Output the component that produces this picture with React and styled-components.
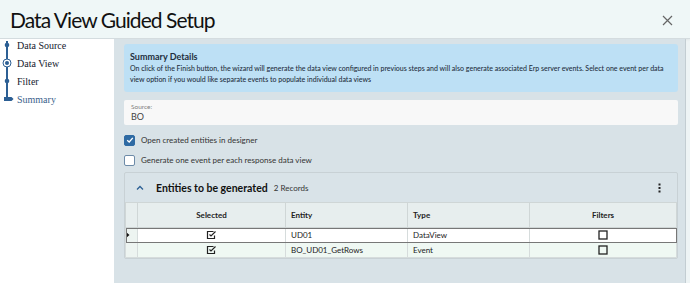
import React from 'react';
import styled, { createGlobalStyle } from 'styled-components';

const GlobalStyle = createGlobalStyle`
  body {
    margin: 0;
    font-family: Lato, "Open Sans", sans-serif;
    color: #222;
  }
`;

const Window = styled.div`
  width: 690px;
  height: 283px;
  display: grid;
  grid-template-rows: 39px 1fr;
  overflow: hidden;
  background: #eef4f5;
`;

const Header = styled.div`
  display: flex;
  justify-content: space-between;
  align-items: center;
  padding: 0 17px 0 10px;
  background-color: #eff7f7;
  border-bottom: 1px solid #d4dcdf;
  box-shadow: 0 1px 2px rgba(0, 0, 0, 0.06);
`;

const Title = styled.h1`
  margin: 0;
  font-size: 21px;
  font-weight: 400;
  color: #111;
  letter-spacing: -0.95px;
`;

const CloseButton = styled.button`
  display: flex;
  background: none;
  border: none;
  padding: 0;
  margin-top: 2px;
  cursor: pointer;
`;

const Body = styled.div`
  display: grid;
  grid-template-columns: 114px minmax(0, 1fr) 4px;
  min-height: 0;
`;

const Sidebar = styled.div`
  background: #fff;
`;

const Steps = styled.ul`
  list-style: none;
  margin: -3px 0 0;
  padding: 0;
  position: relative;

  &::before {
    content: '';
    position: absolute;
    left: 6px;
    top: 5px;
    height: 58px;
    width: 1.5px;
    background: #2c5f94;
  }
`;

const Step = styled.li`
  display: flex;
  align-items: center;
  height: 18px;
  font-family: "Liberation Serif", serif;
  font-size: 10px;
  color: ${p => (p.active ? '#3b5f8c' : '#14202e')};
`;

const Marker = styled.span`
  width: 17px;
  display: flex;
  justify-content: center;
  padding-right: 3px;
  box-sizing: border-box;
  position: relative;
  z-index: 1;
`;

const Main = styled.div`
  background: #d8e2e7;
  border-right: 1px solid #c3cdd2;
  padding: 5px 7px 0 10px;
  display: flex;
  flex-direction: column;
  min-height: 0;
  min-width: 0;
`;

const InfoBox = styled.div`
  background: #bde0f5;
  border-radius: 3px;
  padding: 7px 6px 6px;
  height: 48px;
  box-sizing: border-box;
`;

const InfoTitle = styled.div`
  font-size: 9px;
  font-weight: 700;
  color: #1f2f3d;
  line-height: 11px;
  margin-bottom: 1px;
`;

const InfoText = styled.div`
  font-size: 7px;
  line-height: 11px;
  color: #1f2f3d;
  font-weight: 500;
`;

const Field = styled.div`
  margin-top: 8px;
  height: 25px;
  box-sizing: border-box;
  background: #f8f8f8;
  border-radius: 2px;
  padding: 3px 7px;
  display: flex;
  flex-direction: column;
`;

const FieldLabel = styled.span`
  font-size: 6.5px;
  color: #808080;
  line-height: 8px;
`;

const FieldValue = styled.span`
  font-size: 9px;
  color: #444;
  line-height: 11px;
`;

const CheckRow = styled.label`
  display: flex;
  align-items: center;
  gap: 6px;
  height: 20px;
  font-size: 8px;
  color: #333;
  margin-top: ${p => p.first ? '5px' : '0'};
`;

const Box = styled.span`
  width: 11px;
  height: 11px;
  border-radius: 2px;
  box-sizing: border-box;
  display: flex;
  align-items: center;
  justify-content: center;
  background: ${p => (p.checked ? '#2e6aa3' : '#fff')};
  border: 1px solid ${p => (p.checked ? '#2e6aa3' : '#6d8ba8')};
`;

const GridPanel = styled.div`
  margin-top: 2px;
  border: 1px solid #c8d1d5;
  border-radius: 2px;
  background: #d9e3e8;
`;

const GridHeader = styled.div`
  display: flex;
  align-items: center;
  height: 29px;
  padding: 0 16px 0 11px;
`;

const GridTitle = styled.span`
  font-size: 10.5px;
  font-weight: 700;
  color: #111;
  margin-left: 12px;
`;

const GridCount = styled.span`
  font-size: 8px;
  color: #333;
  margin-left: 6px;
  flex: 1;
`;

const Table = styled.table`
  width: 100%;
  border-collapse: collapse;
  table-layout: fixed;
  font-size: 8px;
  color: #222;
`;

const Th = styled.th`
  height: 24px;
  background: #e7eeee;
  border: 1px solid #cfd6d6;
  font-weight: 700;
  text-align: ${p => (p.center ? 'center' : 'left')};
  padding: 0 5px;
`;

const Row = styled.tr`
  background: ${p => (p.alt ? '#eff8f3' : '#fff')};
  outline: ${p => (p.selected ? '1px solid #777' : 'none')};
  outline-offset: -1px;
`;

const Td = styled.td`
  height: 14px;
  border: 1px solid #d6dcdc;
  padding: 0 5px;
  text-align: ${p => (p.center ? 'center' : 'left')};
  background: ${p => (p.indicator ? '#edf4f1' : 'transparent')};
  line-height: 0;
`;

const CellText = styled.span`
  line-height: 13px;
  display: inline-block;
`;

const CloseIcon = () => (
  <svg width="11" height="11" viewBox="0 0 11 11">
    <path d="M1 1L10 10M10 1L1 10" stroke="#666" strokeWidth="1.2" />
  </svg>
);

const CheckedIcon = () => (
  <svg width="11" height="10" viewBox="0 0 11 10">
    <path d="M7.5 1.5H1.5V8.5H8.5V5.5" fill="none" stroke="#222" strokeWidth="1.2" />
    <path d="M3.5 4.5L5 6L9.5 1.5" fill="none" stroke="#222" strokeWidth="1.2" />
  </svg>
);

const EmptyIcon = () => (
  <svg width="10" height="10" viewBox="0 0 10 10">
    <rect x="1" y="1" width="8" height="8" fill="none" stroke="#222" strokeWidth="1.3" />
  </svg>
);

const TickIcon = () => (
  <svg width="8" height="8" viewBox="0 0 8 8">
    <path d="M1.2 4.2L3.2 6L6.8 1.8" fill="none" stroke="#fff" strokeWidth="1.3" />
  </svg>
);

const steps = [
  { label: 'Data Source', kind: 'dot' },
  { label: 'Data View', kind: 'ring' },
  { label: 'Filter', kind: 'dot' },
  { label: 'Summary', kind: 'flag', active: true },
];

const StepMarker = ({ kind }) => {
  if (kind === 'ring') {
    return (
      <svg width="10" height="10" viewBox="0 0 10 10">
        <circle cx="5" cy="5" r="4" fill="#fff" stroke="#2c5f94" strokeWidth="1" />
        <circle cx="5" cy="5" r="2" fill="#2c5f94" />
      </svg>
    );
  }
  if (kind === 'flag') {
    return (
      <svg width="12" height="6" viewBox="0 0 12 6" style={{ marginLeft: 4 }}>
        <path d="M0 0.5H9L11.5 3L9 5.5H0Z" fill="#2c5f94" />
      </svg>
    );
  }
  return (
    <svg width="6" height="6" viewBox="0 0 6 6">
      <circle cx="3" cy="3" r="2.3" fill="#2c5f94" />
    </svg>
  );
};

const rows = [
  { entity: 'UD01', type: 'DataView' },
  { entity: 'BO_UD01_GetRows', type: 'Event' },
];

export default function App() {
  return (
    <>
      <GlobalStyle />
      <Window>
        <Header>
          <Title>Data View Guided Setup</Title>
          <CloseButton aria-label="Close">
            <CloseIcon />
          </CloseButton>
        </Header>
        <Body>
          <Sidebar>
            <Steps>
              {steps.map(s => (
                <Step key={s.label} active={s.active}>
                  <Marker>
                    <StepMarker kind={s.kind} />
                  </Marker>
                  {s.label}
                </Step>
              ))}
            </Steps>
          </Sidebar>
          <Main>
            <InfoBox>
              <InfoTitle>Summary Details</InfoTitle>
              <InfoText>
                On click of the Finish button, the wizard will generate the data view configured in previous steps and will also generate associated Erp server events. Select one event per data view option if you would like separate events to populate individual data views
              </InfoText>
            </InfoBox>
            <Field>
              <FieldLabel>Source:</FieldLabel>
              <FieldValue>BO</FieldValue>
            </Field>
            <CheckRow first>
              <Box checked><TickIcon /></Box>
              Open created entities in designer
            </CheckRow>
            <CheckRow>
              <Box />
              Generate one event per each response data view
            </CheckRow>
            <GridPanel>
              <GridHeader>
                <svg width="8" height="6" viewBox="0 0 8 6">
                  <path d="M1 4.5L4 1.5L7 4.5" fill="none" stroke="#2c5f94" strokeWidth="1.3" />
                </svg>
                <GridTitle>Entities to be generated</GridTitle>
                <GridCount>2 Records</GridCount>
                <svg width="3" height="10" viewBox="0 0 3 10">
                  <rect x="0.5" y="0.5" width="2" height="2" fill="#222" />
                  <rect x="0.5" y="4" width="2" height="2" fill="#222" />
                  <rect x="0.5" y="7.5" width="2" height="2" fill="#222" />
                </svg>
              </GridHeader>
              <Table>
                <colgroup>
                  <col style={{ width: 12 }} />
                  <col style={{ width: 148 }} />
                  <col style={{ width: 122 }} />
                  <col style={{ width: 122 }} />
                  <col />
                </colgroup>
                <thead>
                  <tr>
                    <Th />
                    <Th center>Selected</Th>
                    <Th>Entity</Th>
                    <Th>Type</Th>
                    <Th center>Filters</Th>
                  </tr>
                </thead>
                <tbody>
                  {rows.map((r, i) => (
                    <Row key={r.entity} alt={i === 1} selected={i === 0}>
                      <Td indicator>
                        {i === 0 && (
                          <svg width="4" height="6" viewBox="0 0 4 6" style={{ marginLeft: -5 }}>
                            <path d="M0 0L3.5 3L0 6Z" fill="#111" />
                          </svg>
                        )}
                      </Td>
                      <Td center><CheckedIcon /></Td>
                      <Td><CellText>{r.entity}</CellText></Td>
                      <Td><CellText>{r.type}</CellText></Td>
                      <Td center><EmptyIcon /></Td>
                    </Row>
                  ))}
                </tbody>
              </Table>
            </GridPanel>
          </Main>
          <div />
        </Body>
      </Window>
    </>
  );
}
